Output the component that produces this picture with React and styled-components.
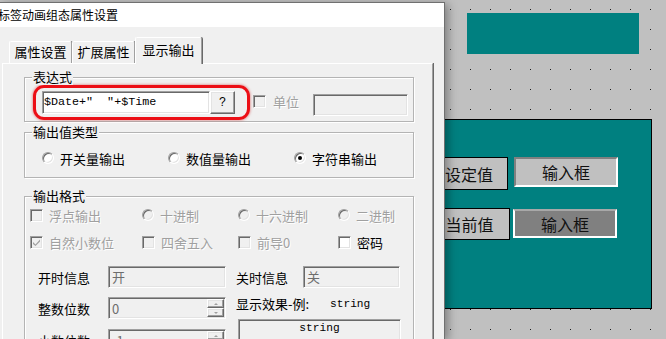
import React from "react";
import styled, { createGlobalStyle, css } from "styled-components";

const CJK = `"Noto Sans CJK SC", "Noto Sans", sans-serif`;
const MONO = `"Liberation Mono", "DejaVu Sans Mono", monospace`;

const GlobalStyle = createGlobalStyle`
  html, body {
    margin: 0;
    padding: 0;
  }
  body {
    width: 666px;
    height: 339px;
    overflow: hidden;
    background: #c0c0c0;
    font-family: ${CJK};
  }
`;

// classic 3D borders
const sunken = css`
  box-sizing: border-box;
  border-style: solid;
  border-width: 1px;
  border-color: #a0a0a0 #ffffff #ffffff #a0a0a0;
  box-shadow: inset 1px 1px 0 #696969, inset -1px -1px 0 #e3e3e3;
`;

const raised = css`
  box-sizing: border-box;
  border-style: solid;
  border-width: 1px;
  border-color: #ffffff #696969 #696969 #ffffff;
  box-shadow: inset -1px -1px 0 #a0a0a0, inset 1px 1px 0 #e3e3e3;
`;

// design canvas
const Desktop = styled.div`
  position: relative;
  width: 666px;
  height: 339px;
  overflow: hidden;
  background-color: #c0c0c0;
  background-image: radial-gradient(
    circle at 0.5px 0.5px,
    #1a1a1a 0.7px,
    transparent 0.9px
  );
  background-size: 20px 20px;
  background-position: 10px 9px;
`;

const TealBar = styled.div`
  position: absolute;
  left: 467px;
  top: 13px;
  width: 172px;
  height: 41px;
  background: #008080;
`;

const TealPanel = styled.div`
  position: absolute;
  left: 300px;
  top: 119px;
  width: 352px;
  height: 190px;
  box-sizing: border-box;
  border: 1px solid #000;
  background: #008080;
`;

const CanvasLabel = styled.div`
  position: absolute;
  left: ${(p) => p.$x}px;
  top: ${(p) => p.$y}px;
  width: ${(p) => p.$w}px;
  height: ${(p) => p.$h}px;
  box-sizing: border-box;
  border: 1px solid #000;
  background: #c0c0c0;
  display: flex;
  align-items: center;
  justify-content: center;
  font-family: ${CJK};
  font-size: 16px;
  color: #111;
`;

const CanvasInput = styled.div`
  position: absolute;
  left: ${(p) => p.$x}px;
  top: ${(p) => p.$y}px;
  width: ${(p) => p.$w}px;
  height: ${(p) => p.$h}px;
  box-sizing: border-box;
  border-style: solid;
  border-width: 2px;
  border-color: ${(p) =>
    p.$dark ? "#a8a8a8 #fff #fff #fff" : "#808080 #fff #fff #808080"};
  background: ${(p) => (p.$dark ? "#808080" : "#c0c0c0")};
  display: flex;
  align-items: center;
  justify-content: center;
  font-family: ${CJK};
  font-size: 16px;
  color: #111;
`;

// dialog window
const Dialog = styled.div`
  position: absolute;
  left: 0;
  top: 2px;
  width: 445px;
  height: 337px;
  box-sizing: border-box;
  border-top: 1px solid #707070;
  border-right: 1px solid #707070;
  background: #f0f0f0;
  box-shadow: 3px 2px 9px rgba(0, 0, 0, 0.35);
  display: flex;
  flex-direction: column;
  font-family: ${CJK};
  font-size: 13px;
  color: #000;
`;

const TitleBar = styled.div`
  height: 25px;
  line-height: 24px;
  background: #fff;
  font-size: 12px;
  text-indent: -2px;
  white-space: nowrap;
`;

const Body = styled.div`
  flex: 1;
  display: flex;
  flex-direction: column;
  padding-top: 10px;
`;

const TabRow = styled.div`
  display: flex;
  align-items: flex-end;
  height: 26px;
  padding-left: 9px;
  position: relative;
  z-index: 1;
`;

const Tab = styled.div`
  width: ${(p) => p.$w}px;
  height: ${(p) => (p.$active ? 27 : 22)}px;
  margin-bottom: ${(p) => (p.$active ? -1 : 0)}px;
  box-sizing: border-box;
  border-top: 1px solid #fff;
  border-left: 1px solid #fff;
  border-right: 1px solid #a0a0a0;
  box-shadow: 1px 0 0 #696969;
  border-radius: 2px 2px 0 0;
  background: #f0f0f0;
  text-align: center;
  line-height: ${(p) => (p.$active ? 24 : 20)}px;
  white-space: nowrap;
`;

const TabPanel = styled.div`
  flex: 1;
  margin-left: 2px;
  width: 431px;
  box-sizing: border-box;
  border-top: 1px solid #fff;
  border-left: 1px solid #fff;
  border-right: 1px solid #a0a0a0;
  box-shadow: 1px 0 0 #696969;
  padding: 13px 0 0 21px;
`;

const Group = styled.div`
  position: relative;
  width: 390px;
  height: ${(p) => p.$h}px;
  margin-top: ${(p) => p.$top || 0}px;
  box-sizing: border-box;
  border: 1px solid #b4b4b4;
  box-shadow: inset 1px 1px 0 #fff, 1px 1px 0 #fff;
  padding-top: ${(p) => p.$pad || 0}px;
`;

const Legend = styled.span`
  position: absolute;
  left: 7px;
  top: -9px;
  padding: 0 1px;
  line-height: 16px;
  background: #f0f0f0;
`;

const ExprRow = styled.div`
  display: flex;
  align-items: flex-start;
  padding-left: 8px;
`;

const RedMark = styled.div`
  width: 217px;
  height: 35px;
  box-sizing: border-box;
  border: 3px solid #ec0f16;
  border-radius: 11px;
  box-shadow: 0 0 3px rgba(200, 0, 0, 0.6);
  padding: 3px 0 0 6px;
  display: flex;
`;

const ExprInput = styled.div`
  ${sunken};
  width: 168px;
  height: 23px;
  background: #fff;
  font-family: ${MONO};
  font-size: 11.7px;
  line-height: 21px;
  padding-left: 1px;
  white-space: pre;
`;

const HelpButton = styled.div`
  ${raised};
  width: 25px;
  height: 23px;
  background: #f0f0f0;
  display: flex;
  align-items: center;
  justify-content: center;
  font-family: ${MONO};
  font-size: 12px;
`;

const CheckBox = styled.span`
  ${sunken};
  flex: none;
  width: 13px;
  height: 13px;
  background: ${(p) => (p.$disabled ? "#f0f0f0" : "#fff")};
  display: flex;
  align-items: center;
  justify-content: center;
`;

const Radio = styled.span`
  ${sunken};
  flex: none;
  width: 12px;
  height: 12px;
  border-radius: 50%;
  background: ${(p) => (p.$disabled ? "#f0f0f0" : "#fff")};
  display: flex;
  align-items: center;
  justify-content: center;
  &::after {
    content: "";
    display: ${(p) => (p.$checked ? "block" : "none")};
    width: 4px;
    height: 4px;
    border-radius: 50%;
    background: #000;
  }
`;

const Option = styled.div`
  display: flex;
  align-items: center;
  gap: 6px;
  white-space: nowrap;
  color: ${(p) => (p.$disabled ? "#a0a0a0" : "#000")};
  text-shadow: ${(p) => (p.$disabled ? "1px 1px 0 #fff" : "none")};
`;

const UnitCheck = styled(Option)`
  margin: 9px 0 0 3px;
  gap: 7px;
  height: 14px;
`;

const UnitInput = styled.div`
  ${sunken};
  width: 95px;
  height: 22px;
  margin: 9px 0 0 14px;
  background: #f0f0f0;
`;

const RadioRow = styled.div`
  display: grid;
  grid-template-columns: repeat(3, 126px);
  align-items: center;
  height: 20px;
  padding-left: 17px;
`;

const FormatRow = styled.div`
  display: grid;
  grid-template-columns: 112px 96px 100px auto;
  align-items: center;
  height: 20px;
  padding-left: 5px;
  margin-top: ${(p) => p.$top || 0}px;
`;

const FieldRow = styled.div`
  display: flex;
  align-items: center;
  height: 22px;
  padding-left: ${(p) => (p.$flush ? 0 : 13)}px;
  margin-top: ${(p) => p.$top || 0}px;
`;

const FieldLabel = styled.span`
  flex: none;
  width: ${(p) => p.$w}px;
  margin-left: ${(p) => p.$gap || 0}px;
  white-space: nowrap;
`;

const Edit = styled.div`
  ${sunken};
  flex: none;
  width: ${(p) => p.$w}px;
  height: 22px;
  background: #f0f0f0;
  color: #6d6d6d;
  line-height: 20px;
  padding-left: 3px;
`;

const LowerBlock = styled.div`
  display: flex;
  margin-top: 9px;
  padding-left: 13px;
`;

const LeftCol = styled.div`
  display: flex;
  flex-direction: column;
  gap: 10px;
`;

const SpinEdit = styled.div`
  ${sunken};
  width: 118px;
  height: 22px;
  background: #f0f0f0;
  display: flex;
  padding: 1px;
`;

const SpinValue = styled.span`
  flex: 1;
  color: #6d6d6d;
  line-height: 19px;
  padding-left: 2px;
`;

const SpinButtons = styled.div`
  width: 17px;
  display: flex;
  flex-direction: column;
`;

const SpinButton = styled.div`
  ${raised};
  flex: 1;
  background: #f0f0f0;
  display: flex;
  align-items: center;
  justify-content: center;
  &::after {
    content: "";
    border-left: 2px solid transparent;
    border-right: 2px solid transparent;
    ${(p) =>
      p.$down
        ? "border-top: 2px solid #a0a0a0;"
        : "border-bottom: 2px solid #a0a0a0;"}
  }
`;

const RightCol = styled.div`
  display: flex;
  flex-direction: column;
  margin-left: 10px;
`;

const ExampleLine = styled.div`
  display: flex;
  height: 14px;
  line-height: 14px;
  white-space: nowrap;
`;

const Mono = styled.span`
  font-family: ${MONO};
  font-size: 11.2px;
`;

const ExampleBox = styled.div`
  ${sunken};
  width: 163px;
  height: 24px;
  margin: 8px 0 0 2px;
  background: #f0f0f0;
  text-align: center;
  line-height: 16px;
  font-family: ${MONO};
  font-size: 11.2px;
`;

const Check = ({ checked, disabled }) => (
  <CheckBox $disabled={disabled}>
    {checked && (
      <svg width="9" height="9" viewBox="0 0 9 9">
        <path
          d="M1 4 L3.5 6.5 L8 1.5 L8 3.5 L3.5 8 L1 6 Z"
          fill={disabled ? "#a0a0a0" : "#000"}
        />
      </svg>
    )}
  </CheckBox>
);

const CheckOption = ({ label, checked, disabled }) => (
  <Option $disabled={disabled}>
    <Check checked={checked} disabled={disabled} />
    {label}
  </Option>
);

const RadioOption = ({ label, checked, disabled }) => (
  <Option $disabled={disabled}>
    <Radio $checked={checked} $disabled={disabled} />
    {label}
  </Option>
);

const Spin = ({ value }) => (
  <SpinEdit>
    <SpinValue>{value}</SpinValue>
    <SpinButtons>
      <SpinButton />
      <SpinButton $down />
    </SpinButtons>
  </SpinEdit>
);

const App = () => {
  return (
    <>
      <GlobalStyle />
      <Desktop>
        <TealBar />
        <TealPanel>
          <CanvasLabel $x={129} $y={37} $w={78} $h={33}>
            设定值
          </CanvasLabel>
          <CanvasInput $x={213} $y={37} $w={104} $h={30}>
            输入框
          </CanvasInput>
          <CanvasLabel $x={128} $y={88} $w={81} $h={32}>
            当前值
          </CanvasLabel>
          <CanvasInput $x={212} $y={89} $w={104} $h={29} $dark>
            输入框
          </CanvasInput>
        </TealPanel>

        <Dialog>
          <TitleBar>标签动画组态属性设置</TitleBar>
          <Body>
            <TabRow>
              <Tab $w={63}>属性设置</Tab>
              <Tab $w={63}>扩展属性</Tab>
              <Tab $w={67} $active>
                显示输出
              </Tab>
            </TabRow>
            <TabPanel>
              <Group $h={45} $pad={7}>
                <Legend>表达式</Legend>
                <ExprRow>
                  <RedMark>
                    <ExprInput>{'$Date+"  "+$Time'}</ExprInput>
                    <HelpButton>?</HelpButton>
                  </RedMark>
                  <UnitCheck $disabled>
                    <Check disabled />
                    单位
                  </UnitCheck>
                  <UnitInput />
                </ExprRow>
              </Group>

              <Group $h={46} $top={10} $pad={15}>
                <Legend>输出值类型</Legend>
                <RadioRow>
                  <RadioOption label="开关量输出" />
                  <RadioOption label="数值量输出" />
                  <RadioOption label="字符串输出" checked />
                </RadioRow>
              </Group>

              <Group $h={200} $top={18} $pad={8}>
                <Legend>输出格式</Legend>
                <FormatRow>
                  <CheckOption label="浮点输出" disabled />
                  <RadioOption label="十进制" disabled />
                  <RadioOption label="十六进制" disabled />
                  <RadioOption label="二进制" disabled />
                </FormatRow>
                <FormatRow $top={7}>
                  <CheckOption label="自然小数位" checked disabled />
                  <CheckOption label="四舍五入" disabled />
                  <CheckOption label="前导0" disabled />
                  <CheckOption label="密码" />
                </FormatRow>
                <FieldRow $top={14}>
                  <FieldLabel $w={70}>开时信息</FieldLabel>
                  <Edit $w={118}>开</Edit>
                  <FieldLabel $w={67} $gap={10}>
                    关时信息
                  </FieldLabel>
                  <Edit $w={97}>关</Edit>
                </FieldRow>
                <LowerBlock>
                  <LeftCol>
                    <FieldRow $flush>
                      <FieldLabel $w={70}>整数位数</FieldLabel>
                      <Spin value="0" />
                    </FieldRow>
                    <FieldRow $flush>
                      <FieldLabel $w={70}>小数位数</FieldLabel>
                      <Spin value="-1" />
                    </FieldRow>
                  </LeftCol>
                  <RightCol>
                    <ExampleLine>
                      <FieldLabel $w={94}>显示效果-例:</FieldLabel>
                      <Mono>string</Mono>
                    </ExampleLine>
                    <ExampleBox>string</ExampleBox>
                  </RightCol>
                </LowerBlock>
              </Group>
            </TabPanel>
          </Body>
        </Dialog>
      </Desktop>
    </>
  );
};

export default App;
